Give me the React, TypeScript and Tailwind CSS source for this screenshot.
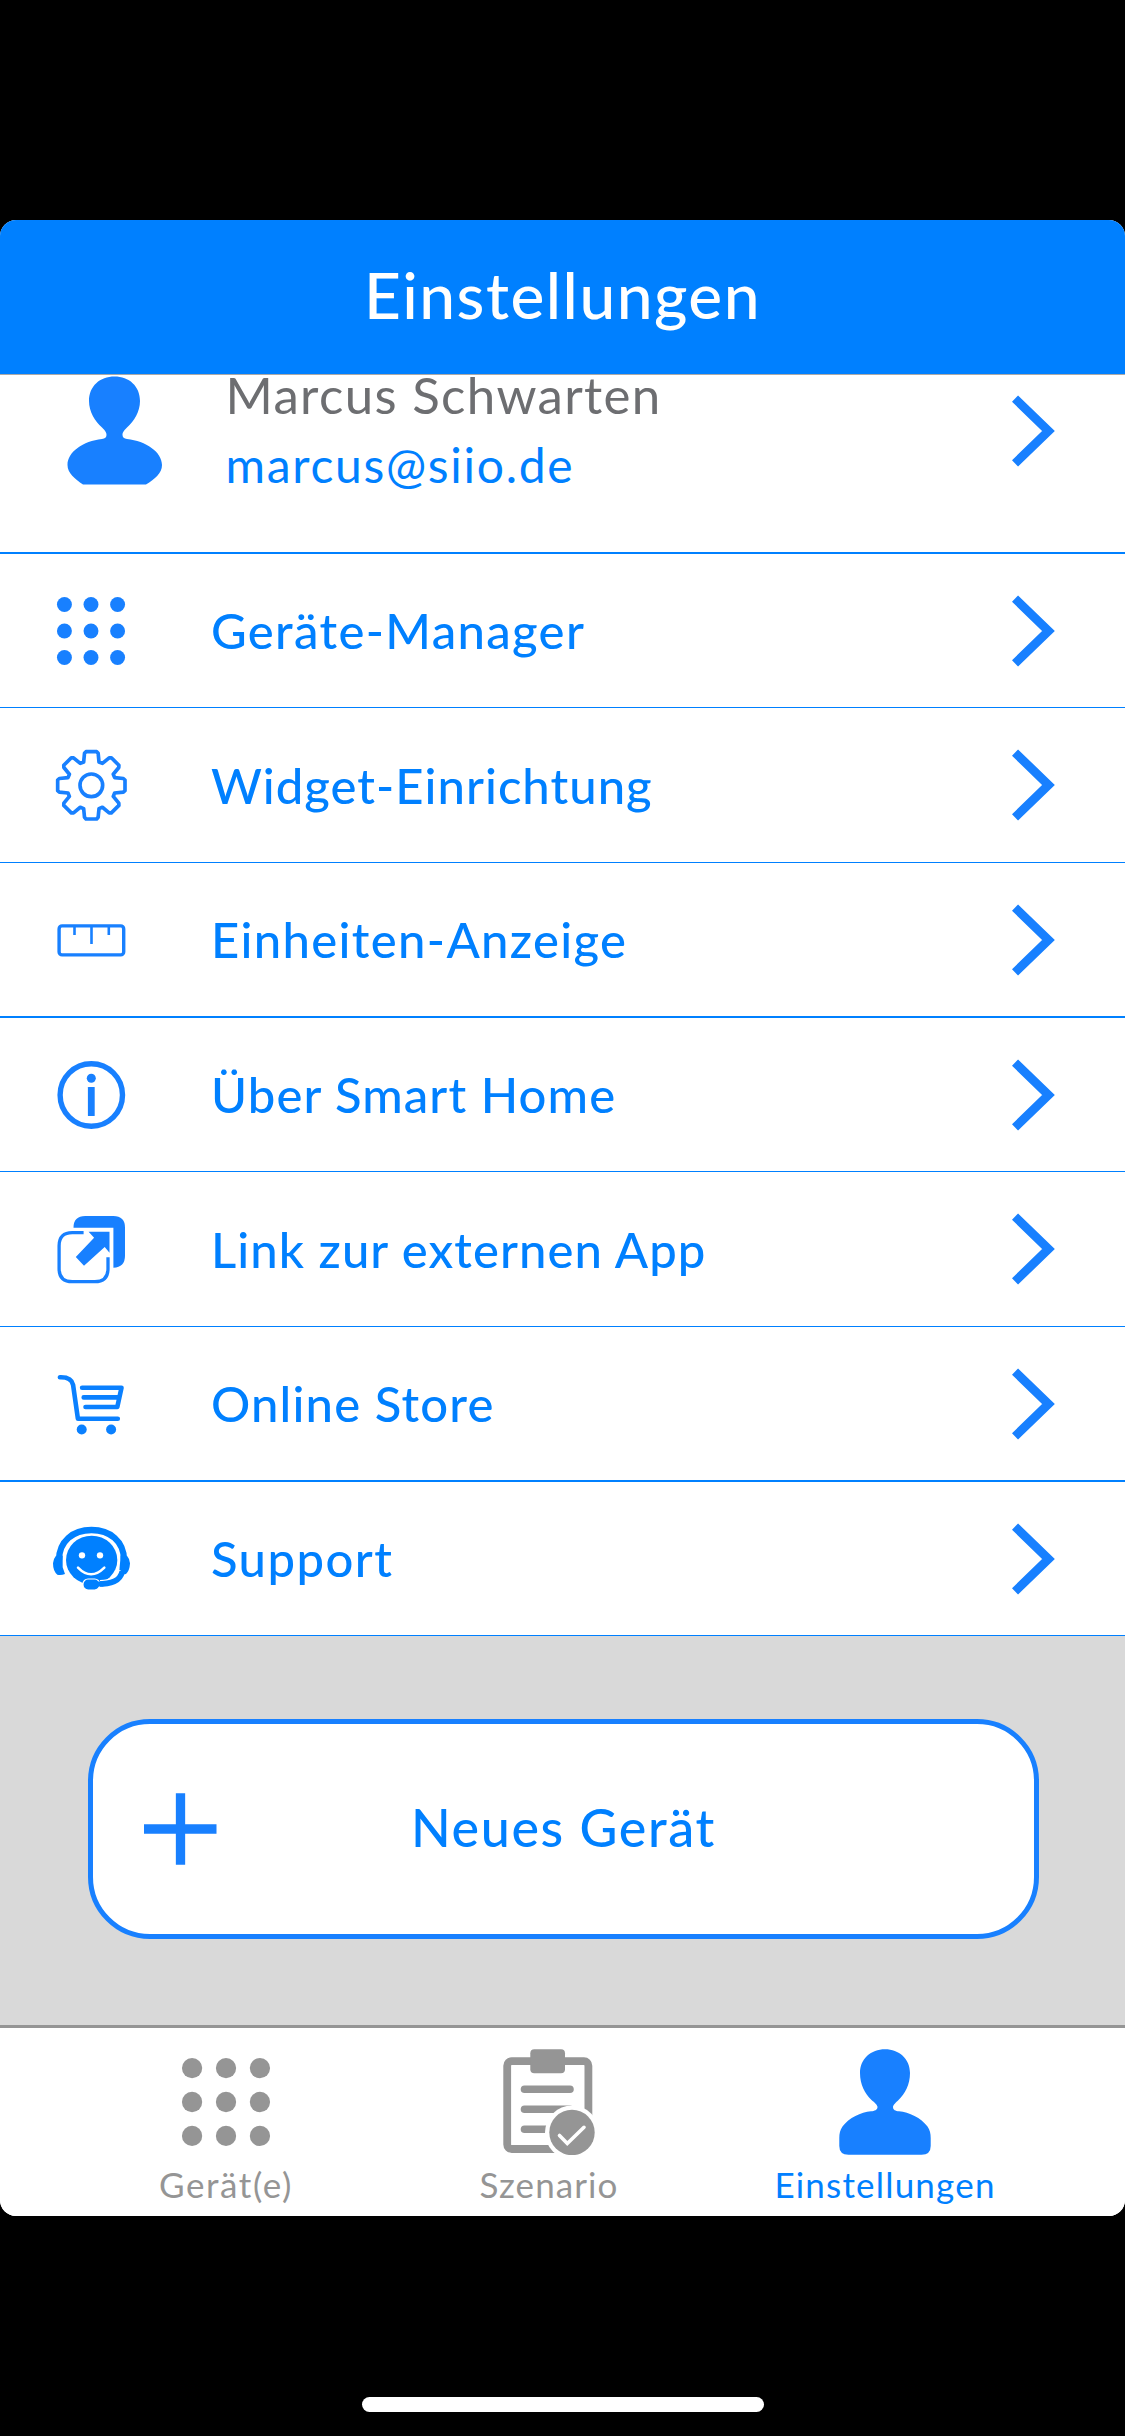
import type { ReactNode } from "react";

const BLUE = "#1880ff";

function DotsIcon({ radius, gap, className }: { radius: number; gap: number; className: string }) {
  const steps = [-gap, 0, gap];
  return (
    <svg viewBox="-45 -45 90 90" className={className} fill="currentColor">
      {steps.map((y) => steps.map((x) => <circle key={`${x}:${y}`} cx={x} cy={y} r={radius} />))}
    </svg>
  );
}

/* One tooth of the gear, turned eight times around the centre. */
function gearPath() {
  const tooth = [
    [-23, -70],
    [-20.5, -96],
    [-16, -101],
    [16, -101],
    [20.5, -96],
    [23, -70],
  ];
  const points: string[] = [];
  for (let i = 0; i < 8; i++) {
    const a = (i * Math.PI) / 4;
    for (const [x, y] of tooth) {
      const px = x * Math.cos(a) - y * Math.sin(a);
      const py = x * Math.sin(a) + y * Math.cos(a);
      points.push(`${px.toFixed(1)} ${py.toFixed(1)}`);
    }
  }
  return `M${points.join("L")}Z`;
}

function GearIcon() {
  return (
    <svg viewBox="-121 -121 240 240" className="size-20" fill="none" stroke={BLUE} strokeWidth="11" strokeLinejoin="round">
      <path d={gearPath()} />
      <circle r="34" />
    </svg>
  );
}

function RulerIcon() {
  return (
    <svg viewBox="0 0 80 80" className="size-20" fill="none" stroke={BLUE}>
      <rect x="8.1" y="25.9" width="64.6" height="29" rx="3" strokeWidth="3.4" />
      <path d="M23.5 26v9M40.5 26v18M57.8 26v9" strokeWidth="2.6" />
    </svg>
  );
}

function InfoIcon() {
  return (
    <svg viewBox="-0.3 0 80 80" className="size-20">
      <circle cx="40" cy="40" r="31.2" fill="none" stroke={BLUE} strokeWidth="5.4" />
      <circle cx="40" cy="23.3" r="4.5" fill={BLUE} />
      <rect x="36.6" y="32" width="6.8" height="29" rx="0.6" fill={BLUE} />
    </svg>
  );
}

function ExternalIcon() {
  return (
    <svg viewBox="-0.3 -0.7 80 80" className="size-20">
      <path d="M22.2 18Q22.2 6.3 34 6.3H62Q73.7 6.3 73.7 18V46Q73.7 57.5 62.1 58V18Z" fill={BLUE} />
      <path d="M32.3 23H21Q7.8 23 7.8 36V59Q7.8 72 21 72H43.5Q56.7 72 56.7 59V47.6" fill="none" stroke={BLUE} strokeWidth="3.3" />
      <path d="M37.3 22H58.2V43L53.4 37.3L32.7 56L24.5 47.3L42.8 28Z" fill={BLUE} />
    </svg>
  );
}

function CartIcon() {
  return (
    <svg viewBox="-0.3 -0.5 80 80" className="size-20" fill="none" stroke="#0a80ff" strokeWidth="4.6" strokeLinecap="round" strokeLinejoin="round">
      <path d="M8.6 12.8C15 12.6 20.6 14 21.8 20.5L26.6 54.3H66.5" />
      <path d="M30.8 23.3H70.2L66 42.5H34.2M32.4 32.9H67.4" />
      <circle cx="30.4" cy="65" r="5" fill="#0a80ff" stroke="none" />
      <circle cx="59.8" cy="65" r="5" fill="#0a80ff" stroke="none" />
    </svg>
  );
}

function SupportIcon() {
  return (
    <svg viewBox="33 27 240 240" className="size-20">
      <path d="M57 150C57 94 99 60 154.5 60S252 94 252 150" fill="none" stroke="#0080ff" strokeWidth="19" />
      <ellipse cx="155" cy="150" rx="77" ry="73" fill="#0080ff" />
      <path d="M48 137H68V172L75 192Q64 196 52 194Q39 184 39 160Q40 146 48 137Z" fill="#0080ff" />
      <path d="M242 137H261Q269 146 270 160Q269 182 258 192L240 196L238 182Z" fill="#0080ff" />
      <path d="M237 180C233 206 212 215 180 215" fill="none" stroke="#fff" strokeWidth="10" />
      <path d="M247 184C240 214 214 222 172 222" fill="none" stroke="#0080ff" strokeWidth="17" />
      <rect x="129" y="207" width="50" height="33" rx="15" fill="#0080ff" stroke="#fff" strokeWidth="3.5" />
      <path d="M168 214.5H190V229.5H168Z" fill="#0080ff" />
      <circle cx="126" cy="136" r="9.5" fill="#fff" />
      <circle cx="180" cy="136" r="9.5" fill="#fff" />
      <path d="M114 173Q153 213 193 173" fill="none" stroke="#fff" strokeWidth="7.5" strokeLinecap="round" />
    </svg>
  );
}

function Chevron() {
  return (
    <svg viewBox="0.5 0 44 72" className="h-[72px] w-11 shrink-0" fill="none" stroke={BLUE} strokeWidth="8.8">
      <path d="M3.5 3.6L37 36L3.5 68.4" />
    </svg>
  );
}

function ClipboardIcon() {
  return (
    <svg viewBox="0 0 92 106" className="h-[106px] w-[92px]">
      <rect x="4.2" y="12.2" width="81.2" height="87.8" rx="4.5" fill="none" stroke="#959595" strokeWidth="7.8" />
      <rect x="27.3" y="0.3" width="34.7" height="24" rx="4" fill="#959595" />
      <path d="M21.5 40.3H67M21.5 60.3H67M21.5 80.3H60" stroke="#959595" strokeWidth="7.6" strokeLinecap="round" />
      <circle cx="69" cy="83.5" r="27" fill="#fff" />
      <circle cx="69" cy="83.5" r="22.7" fill="#959595" />
      <path d="M56.5 86.5L64.3 94.5L81 78.3" fill="none" stroke="#fff" strokeWidth="3.6" strokeLinecap="round" />
    </svg>
  );
}

function PersonIcon() {
  return (
    <svg viewBox="0 0 92 106" className="h-[106px] w-[92px]" fill={BLUE}>
      <path d="M46 .3C60 .3 71 10 71 24C71 36 66 44.5 59.5 51C57 53.5 54 56 54 58C54 61 56.5 62 60 62.3C70 63 82 69 88.5 77.5C91 81 91.7 84.5 91.7 89V97Q91.7 105.7 82.5 105.7H9.5Q.3 105.7 .3 97V89C.3 84.5 1 81 3.5 77.5C10 69 22 63 32 62.3C35.5 62 38.5 61 38.5 58C38.5 56 35.5 53.5 32.5 51C26 44.5 21 36 21 24C21 10 32 .3 46 .3Z" />
    </svg>
  );
}

function AvatarIcon() {
  return (
    <svg viewBox="0 0 96 112" className="h-28 w-24 shrink-0 blur-[0.7px]" fill={BLUE}>
      <path d="M47.5 1.5C62 1.5 73 11 73 26C73 37 67 46 60 52.5C56.5 56 55.5 57.5 55.5 60C55.5 62.5 57 63.5 60 64C79 66 95 77 95 90C95 98 88 104 79 109.5H16C8 104 .5 98 .5 90C.5 77 16 66 35 64C38 63.5 39.5 62.5 39.5 60C39.5 57.5 38.5 56 35 52.5C28 46 22 37 22 26C22 11 33 1.5 47.5 1.5Z" />
    </svg>
  );
}

type Item = { label: string; icon: ReactNode; row: string; text: string };

const items: Item[] = [
  { label: "Geräte-Manager", icon: <DotsIcon radius={8.4} gap={29.9} className="size-20 text-[#1880ff]" />, row: "h-[154px] border-b", text: "tracking-[1.35px]" },
  { label: "Widget-Einrichtung", icon: <GearIcon />, row: "h-[155px] border-b", text: "tracking-[1.03px]" },
  { label: "Einheiten-Anzeige", icon: <RulerIcon />, row: "h-[155px] border-b-2", text: "tracking-[1.34px]" },
  { label: "Über Smart Home", icon: <InfoIcon />, row: "h-[154px] border-b", text: "tracking-[1.1px]" },
  { label: "Link zur externen App", icon: <ExternalIcon />, row: "h-[155px] border-b", text: "tracking-[1.08px]" },
  { label: "Online Store", icon: <CartIcon />, row: "h-[155px] border-b-2", text: "tracking-[1.17px]" },
  { label: "Support", icon: <SupportIcon />, row: "h-[154px] border-b", text: "tracking-[1.45px]" },
];

export default function App() {
  return (
    <div className="flex h-[2436px] w-[1125px] flex-col overflow-hidden bg-black pt-[220px] font-['Lato',sans-serif] text-[#0080ff]">
      <div className="flex h-[1996px] shrink-0 flex-col overflow-hidden rounded-[16px] bg-white">
        <header className="flex h-[155px] shrink-0 items-center justify-center border-b border-[#a9a9a9] bg-[#0080ff] pb-[5px]">
          <h1 className="text-[64px] leading-none font-medium tracking-[1.5px] text-white">Einstellungen</h1>
        </header>

        <section className="flex h-[179px] shrink-0 items-start overflow-hidden border-b-2 border-[#0080ff] pr-[69px] pl-[67px]">
          <AvatarIcon />
          <div className="-mt-[15px] ml-[62.5px] flex grow flex-col">
            <span className="text-[51px] leading-[70px] tracking-[1.33px] text-[#6d6e71]">Marcus Schwarten</span>
            <span className="text-[48px] leading-[70px] tracking-[1.7px]">marcus@siio.de</span>
          </div>
          <div className="mt-[19.5px]">
            <Chevron />
          </div>
        </section>

        <nav className="flex shrink-0 flex-col">
          {items.map((item) => (
            <a key={item.label} className={`flex items-center border-[#0080ff] pr-[69px] pl-[51px] ${item.row}`}>
              {item.icon}
              <span className={`ml-20 grow text-[49px] leading-none font-medium ${item.text}`}>{item.label}</span>
              <Chevron />
            </a>
          ))}
        </nav>

        <section className="flex grow items-center bg-[#d9d9d9] pr-[86.5px] pb-[3px] pl-[88px]">
          <button className="flex h-[220px] w-full items-center rounded-[62px] border-5 border-[#1880ff] bg-white pl-[50px]">
            <svg viewBox="0 0 74 74" className="size-[74px]" stroke={BLUE} strokeWidth="9.3">
              <path d="M1 37H73.5M37.5 1.3V72.7" />
            </svg>
            <span className="ml-[194px] pb-[5px] text-[52px] leading-none font-medium tracking-[1.62px]">Neues Gerät</span>
          </button>
        </section>

        <footer className="flex h-[191px] shrink-0 border-t-3 border-[#959595] bg-white pt-[21px] pl-[100px] text-[35px] leading-[42px] text-[#959595]">
          <div className="flex w-[252px] flex-col items-center">
            <DotsIcon radius={8.6} gap={28.8} className="size-[106px]" />
            <span className="mt-2 tracking-[1.57px]">Gerät(e)</span>
          </div>
          <div className="ml-[71px] flex w-[252px] flex-col items-center">
            <ClipboardIcon />
            <span className="mt-2 tracking-[1.09px]">Szenario</span>
          </div>
          <div className="ml-[84px] flex w-[252px] flex-col items-center text-[#0080ff]">
            <PersonIcon />
            <span className="mt-2 tracking-[1.2px]">Einstellungen</span>
          </div>
        </footer>
      </div>
      <div className="mx-auto mt-auto mb-6 h-[15px] w-[402px] shrink-0 rounded-full bg-white" />
    </div>
  );
}
